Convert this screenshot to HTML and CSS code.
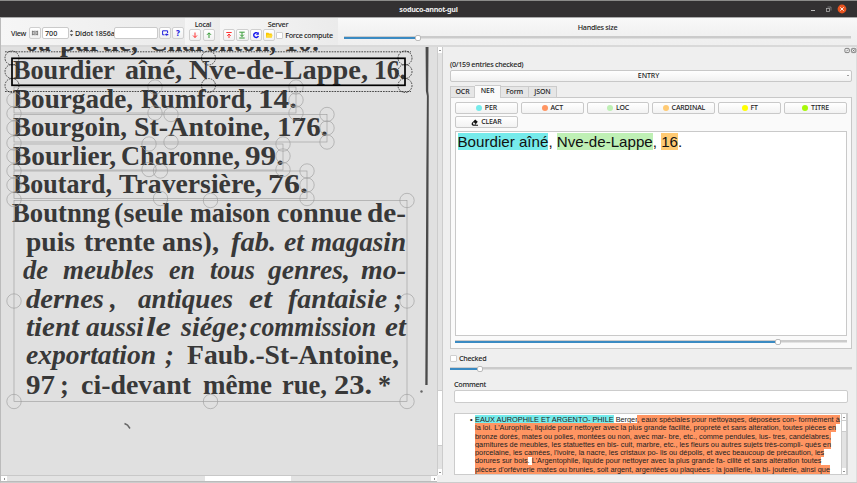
FILE: index.html
```html
<!DOCTYPE html>
<html lang="en">
<head>
<meta charset="utf-8">
<title>soduco-annot-gui</title>
<link rel="stylesheet" href="styles.css">
</head>
<body>
<div class="window">
  <header class="titlebar">
    <span class="title">soduco-annot-gui</span>
    <svg class="winbtns" width="50" height="16" viewBox="0 0 50 16" fill="none">
      <path d="M7 9.5h4" stroke="#bbb"/>
      <rect x="22.5" y="7.5" width="3" height="3" stroke="#aaa" stroke-width=".8"/><path d="M23.5 6h3.5v3.5" stroke="#888" stroke-width=".8"/>
      <circle cx="38" cy="8" r="4.4" fill="#e95420"/><path d="M36.3 6.3l3.4 3.4M39.7 6.3l-3.4 3.4" stroke="#fff" stroke-width=".9"/>
    </svg>
  </header>

  <div class="toolbar">
    <div class="group view">
      <span class="lbl name">View</span>
      <span class="btn fit"><svg width="8" height="8" viewBox="0 0 8 8"><path d="M1.4 1.7v4.6M6.6 1.7v4.6M3.2 1.7v4.6M4.9 1.7v4.6M1.4 2.7h1.8M4.9 2.7h1.7M1.4 5.3h1.8M4.9 5.3h1.7" fill="none" stroke="#555" stroke-width=".7"/></svg></span>
      <span class="field num">700</span>
      <svg class="spin" width="5" height="10" viewBox="0 0 5 10"><path d="M.8 3.7L2.5 1.8l1.7 1.9zM.8 6.3l1.7 1.9 1.7-1.9z" fill="#444"/></svg>
      <span class="lbl didot">Didot 1856a</span>
      <span class="field page"></span>
      <span class="btn nav"><svg width="8" height="8" viewBox="0 0 8 8" fill="none"><path d="M3.5 5.8H1.6V1.8h5v2.4" stroke="#22d"/><path d="M4 5.5l1.5-1.6v1h1.8v1.3H5.5v1z" fill="#22d"/></svg></span>
      <span class="btn help">?</span>
    </div>
    <div class="group local">
      <span class="head">Local</span>
      <div class="btns">
        <span class="btn"><svg width="8" height="8" viewBox="0 0 8 8"><path d="M4 1.5v5M2 4.5l2 2 2-2" fill="none" stroke="#f33"/></svg></span>
        <span class="btn"><svg width="8" height="8" viewBox="0 0 8 8"><path d="M4 7V2M2 3.8l2-2 2 2" fill="none" stroke="#393"/></svg></span>
      </div>
    </div>
    <div class="group server">
      <span class="head">Server</span>
      <div class="btns">
        <span class="btn"><svg width="8" height="8" viewBox="0 0 8 8"><path d="M1.3 1.5h5.4M4 7V3M2.2 4.8L4 3l1.8 1.8" fill="none" stroke="#f33"/></svg></span>
        <span class="btn"><svg width="8" height="8" viewBox="0 0 8 8"><path d="M1.3 1.2h5.4M1.3 7h5.4M4 1.5v4M2.2 3.7L4 5.5l1.8-1.8" fill="none" stroke="#393"/></svg></span>
        <span class="btn"><svg width="8" height="8" viewBox="0 0 8 8"><path d="M5.8 2.3A2.4 2.4 0 1 0 6.4 5" fill="none" stroke="#11e" stroke-width="1.4"/><path d="M3.8 3.8h3V1z" fill="#11e"/></svg></span>
        <span class="btn"><svg width="8" height="8" viewBox="0 0 8 8"><path d="M1 6.5V1.7h2.3l.8.8h2.7v4z" fill="#fbc800"/><path d="M1 6.5l1-2.7h5.7l-1 2.7z" fill="#ffdb32"/></svg></span>
        <span class="check"></span><span class="lbl">Force compute</span>
      </div>
    </div>
    <div class="handles">
      <span class="head">Handles size</span>
      <div class="slider s-handles"><span class="fill"></span><span class="knob"></span></div>
    </div>
  </div>

  <main class="main">
    <section class="viewer">
      <div class="scanrow">
        <svg class="scan" width="436" height="428" viewBox="1 47 436 428">
          <rect x="1" y="47" width="436" height="428" fill="#e0e0e0"/>
          <g class="print">
            <text x="26" y="50.5" textLength="25" lengthAdjust="spacingAndGlyphs">ou</text><text x="60" y="50.5" textLength="78" lengthAdjust="spacingAndGlyphs">partie,</text><text x="149" y="50.5" textLength="127" lengthAdjust="spacingAndGlyphs">Charonton,</text><text x="284" y="50.5" textLength="35" lengthAdjust="spacingAndGlyphs">10.</text>
            <text x="13" y="79" textLength="102" lengthAdjust="spacingAndGlyphs">Bourdier</text><text x="125" y="79" textLength="57" lengthAdjust="spacingAndGlyphs">aîné,</text><text x="189" y="79" textLength="179" lengthAdjust="spacingAndGlyphs">Nve-de-Lappe,</text><text x="374" y="79" textLength="32" lengthAdjust="spacingAndGlyphs">16.</text>
            <text x="13" y="107.5" textLength="120" lengthAdjust="spacingAndGlyphs">Bourgade,</text><text x="141" y="107.5" textLength="111" lengthAdjust="spacingAndGlyphs">Rumford,</text><text x="258" y="107.5" textLength="39" lengthAdjust="spacingAndGlyphs">14.</text>
            <text x="13" y="136" textLength="114" lengthAdjust="spacingAndGlyphs">Bourgoin,</text><text x="134" y="136" textLength="136" lengthAdjust="spacingAndGlyphs">St-Antoine,</text><text x="277" y="136" textLength="51" lengthAdjust="spacingAndGlyphs">176.</text>
            <text x="13" y="164.5" textLength="103" lengthAdjust="spacingAndGlyphs">Bourlier,</text><text x="121" y="164.5" textLength="119" lengthAdjust="spacingAndGlyphs">Charonne,</text><text x="245" y="164.5" textLength="39" lengthAdjust="spacingAndGlyphs">99.</text>
            <text x="13" y="193" textLength="99" lengthAdjust="spacingAndGlyphs">Boutard,</text><text x="119" y="193" textLength="143" lengthAdjust="spacingAndGlyphs">Traversière,</text><text x="268" y="193" textLength="40" lengthAdjust="spacingAndGlyphs">76.</text>
            <text x="12" y="222" textLength="98" lengthAdjust="spacingAndGlyphs">Boutnng</text><text x="114" y="222" textLength="69" lengthAdjust="spacingAndGlyphs">(seule</text><text x="190" y="222" textLength="80" lengthAdjust="spacingAndGlyphs">maison</text><text x="277" y="222" textLength="85" lengthAdjust="spacingAndGlyphs">connue</text><text x="367" y="222" textLength="39" lengthAdjust="spacingAndGlyphs">de-</text>
            <text x="26" y="250.5" textLength="49" lengthAdjust="spacingAndGlyphs">puis</text><text x="84" y="250.5" textLength="71" lengthAdjust="spacingAndGlyphs">trente</text><text x="162" y="250.5" textLength="57" lengthAdjust="spacingAndGlyphs">ans),</text>
            <text x="26" y="394" textLength="29" lengthAdjust="spacingAndGlyphs">97</text><text x="60" y="394">;</text><text x="81" y="394" textLength="110" lengthAdjust="spacingAndGlyphs">ci-devant</text><text x="203" y="394" textLength="69" lengthAdjust="spacingAndGlyphs">même</text><text x="282" y="394" textLength="45" lengthAdjust="spacingAndGlyphs">rue,</text><text x="334" y="394" textLength="38" lengthAdjust="spacingAndGlyphs">23.</text><text x="378" y="394" textLength="13" lengthAdjust="spacingAndGlyphs">*</text>
            <text x="187" y="364" textLength="212" lengthAdjust="spacingAndGlyphs">Faub.-St-Antoine,</text>
            <g class="ital">
              <text x="231" y="250.5" textLength="45" lengthAdjust="spacingAndGlyphs">fab.</text><text x="284" y="250.5" textLength="20" lengthAdjust="spacingAndGlyphs">et</text><text x="311" y="250.5" textLength="95" lengthAdjust="spacingAndGlyphs">magasin</text>
              <text x="23" y="279" textLength="25" lengthAdjust="spacingAndGlyphs">de</text><text x="63" y="279" textLength="91" lengthAdjust="spacingAndGlyphs">meubles</text><text x="169" y="279" textLength="26" lengthAdjust="spacingAndGlyphs">en</text><text x="210" y="279" textLength="45" lengthAdjust="spacingAndGlyphs">tous</text><text x="268" y="279" textLength="82" lengthAdjust="spacingAndGlyphs">genres,</text><text x="361" y="279" textLength="45" lengthAdjust="spacingAndGlyphs">mo-</text>
              <text x="26" y="307.5" textLength="78" lengthAdjust="spacingAndGlyphs">dernes</text><text x="110" y="307.5">,</text><text x="138" y="307.5" textLength="95" lengthAdjust="spacingAndGlyphs">antiques</text><text x="249" y="307.5" textLength="23" lengthAdjust="spacingAndGlyphs">et</text><text x="288" y="307.5" textLength="99" lengthAdjust="spacingAndGlyphs">fantaisie</text><text x="394" y="307.5">;</text>
              <text x="26" y="335.5" textLength="53" lengthAdjust="spacingAndGlyphs">tient</text><text x="86" y="335.5" textLength="58" lengthAdjust="spacingAndGlyphs">aussi</text><text x="146" y="335.5" textLength="25" lengthAdjust="spacingAndGlyphs">le</text><text x="181" y="335.5" textLength="67" lengthAdjust="spacingAndGlyphs">siége;</text><text x="250" y="335.5" textLength="126" lengthAdjust="spacingAndGlyphs">commission</text><text x="385" y="335.5" textLength="21" lengthAdjust="spacingAndGlyphs">et</text>
              <text x="26" y="364" textLength="130" lengthAdjust="spacingAndGlyphs">exportation</text><text x="165" y="364">;</text>
            </g>
          </g>
          <path d="M425.6 47l.3 44 1 5-.6 80-1 209h2.3l.8-160 .4-129-.6-5 .3-44z" fill="#4a4a4a"/>
          <circle cx="421.5" cy="391.5" r="1.2" fill="#666"/>
          <path d="M124.5 423.5l3 1.5 2.5 3.5" fill="none" stroke="#666" stroke-width="1.5"/>
          <g class="boxes">
            <rect x="14" y="87" width="282" height="26"/><rect x="14" y="114.5" width="313" height="27.5"/><rect x="14" y="144" width="269" height="26"/><rect x="14" y="171" width="293" height="27.5"/><rect x="14" y="200.5" width="393" height="201"/>
            <circle cx="155" cy="87" r="7.2"/><circle cx="155" cy="113" r="7.2"/><circle cx="296" cy="87" r="7.2"/><circle cx="296" cy="100" r="7.2"/><circle cx="296" cy="113" r="7.2"/><circle cx="14" cy="100" r="7.2"/><circle cx="14" cy="113.5" r="7.2"/>
            <circle cx="171" cy="114.5" r="7.2"/><circle cx="171" cy="142" r="7.2"/><circle cx="327" cy="114.5" r="7.2"/><circle cx="327" cy="128" r="7.2"/><circle cx="327" cy="142" r="7.2"/><circle cx="14" cy="128" r="7.2"/><circle cx="14" cy="143" r="7.2"/>
            <circle cx="149" cy="144" r="7.2"/><circle cx="149" cy="169.5" r="7.2"/><circle cx="283" cy="144" r="7.2"/><circle cx="283" cy="156" r="7.2"/><circle cx="283" cy="169.5" r="7.2"/><circle cx="14" cy="156" r="7.2"/><circle cx="14" cy="171" r="7.2"/>
            <circle cx="160.5" cy="171" r="7.2"/><circle cx="160.5" cy="198.5" r="7.2"/><circle cx="307" cy="171" r="7.2"/><circle cx="307" cy="185" r="7.2"/><circle cx="307" cy="198.5" r="7.2"/><circle cx="14" cy="185" r="7.2"/><circle cx="14" cy="199.5" r="7.2"/>
            <circle cx="210.5" cy="200.5" r="7.2"/><circle cx="407" cy="200.5" r="7.2"/><circle cx="407" cy="301" r="7.2"/><circle cx="14" cy="301" r="7.2"/><circle cx="14" cy="401.5" r="7.2"/><circle cx="210.5" cy="401.5" r="7.2"/><circle cx="407" cy="401.5" r="7.2"/>
          </g>
          <g class="selected">
            <path d="M5 51.8h406M5 91.5h406"/>
            <circle cx="12" cy="58" r="7"/><circle cx="12" cy="71.5" r="7"/><circle cx="12" cy="85.5" r="7"/><circle cx="208.5" cy="58" r="7"/><circle cx="208.5" cy="85.5" r="7"/><circle cx="405" cy="58" r="7"/><circle cx="405" cy="71.5" r="7"/><circle cx="405" cy="85.5" r="7"/>
            <rect x="12" y="58.3" width="393" height="27" class="thick"/>
          </g>
        </svg>
        <div class="vbar"><span class="arrow up"></span><span class="track"></span><span class="thumb"></span><span class="rest"></span><span class="arrow down"></span></div>
      </div>
      <div class="hbar"><span class="arrow left"></span><span class="track"></span><span class="thumb"></span><span class="rest"></span><span class="arrow right"></span></div>
    </section>

    <aside class="side">
      <div class="dock">
        <svg width="13" height="7" viewBox="0 0 13 7" fill="none" stroke="#666" stroke-width=".8"><rect x=".9" y="1.4" width="4.4" height="4.2" rx="1"/><path d="M2.3 4.4l1.8-1.8"/><rect x="7.4" y="1.4" width="4.4" height="4.2" rx="1"/><path d="M8.5 2.4l2.2 2.2M10.7 2.4L8.5 4.6"/></svg>
      </div>
      <div class="count">(0/159 entries checked)</div>
      <div class="combo"><span>ENTRY</span><i></i></div>
      <div class="tabs"><span class="t1">OCR</span><span class="t2 on">NER</span><span class="t3">Form</span><span class="t4">JSON</span></div>
      <div class="pane">
        <div class="tags">
          <span class="tag"><i class="per"></i>PER</span>
          <span class="tag"><i class="act"></i>ACT</span>
          <span class="tag"><i class="loc"></i>LOC</span>
          <span class="tag"><i class="card"></i>CARDINAL</span>
          <span class="tag"><i class="ft"></i>FT</span>
          <span class="tag"><i class="titre"></i>TITRE</span>
          <span class="tag"><svg width="8" height="7" viewBox="0 0 8 7"><path d="M.8 3.9L4.2.6l2.6 2.2-2.5 3H7V6.7H1.8L.6 5.4z" fill="#111"/><path d="M1.8 4.3l1.1-1 1.5 1.4-.9 1H2.6z" fill="#eee"/></svg>CLEAR</span>
        </div>
        <div class="editor"><mark class="per">Bourdier aîné</mark>, <mark class="loc">Nve-de-Lappe</mark>, <mark class="card">16</mark>.</div>
        <div class="slider s-zoom"><span class="fill"></span><span class="knob"></span></div>
      </div>
      <div class="checked"><span class="check"></span>Checked</div>
      <div class="slider s-low"><span class="fill"></span><span class="knob"></span></div>
      <div class="comment">Comment</div>
      <div class="input"></div>
      <div class="preview">
        <div class="text">
          <div class="l1"><b>•</b><mark class="per">EAUX AUROPHILE ET ARGENTO- PHILE</mark> Berger<mark class="act">, eaux spéciales pour nettoyages, déposées con- formément à</mark></div>
          <div><mark class="act">la loi. L'Aurophile, liquide pour nettoyer avec la plus grande facilité, propreté et sans altération, toutes pièces en</mark></div>
          <div><mark class="act">bronze dorés, mates ou polies, montées ou non, avec mar- bre, etc., comme pendules, lus- tres, candélabres,</mark></div>
          <div><mark class="act">garnitures de meubles, les statuettes en bis- cuit, marbre, etc., les fleurs ou autres sujets très-compli- qués en</mark></div>
          <div><mark class="act">porcelaine, les camées, l'ivoire, la nacre, les cristaux po- lis ou dépolis, et avec beaucoup de précaution, les</mark></div>
          <div><mark class="act">dorures sur bois</mark>. <mark class="act">L'Argentophile, liquide pour nettoyer avec la plus grande fa- cilité et sans altération toutes</mark></div>
          <div><mark class="act">pièces d'orfévrerie mates ou brunies, soit argent, argentées ou plaquées : la joaillerie, la bi- jouterie, ainsi que</mark></div>
        </div>
        <div class="vbar small"><span class="arrow up"></span><span class="thumb"></span><span class="track"></span><span class="arrow down"></span></div>
      </div>
    </aside>
  </main>
</div>
</body>
</html>
```

FILE: styles.css
```css
* { box-sizing: border-box; }
body {
  margin: 0;
  width: 857px;
  height: 483px;
  overflow: hidden;
  background: #efefef;
  color: #222;
  font: 500 7.2px/10px "Noto Sans", "Liberation Sans", sans-serif;
  letter-spacing: -.28px;
}
.window {
  height: 483px;
  display: flex;
  flex-direction: column;
  border-left: 1px solid #bbb;
  border-bottom: 1px solid #ccc;
}
.titlebar {
  height: 18px;
  flex: none;
  display: grid;
  grid-template-columns: 50px 1fr 50px;
  background: #333132;
  border-top: 1px solid #8c8c8a;
  margin-left: -1px;
  border-bottom: 1px solid #aaa;
}
.title {
  grid-column: 2;
  text-align: center;
  color: #eee;
  font-weight: 700;
  font-size: 7.2px;
  line-height: 16px;
}
.winbtns { margin-left: -3px; }

.toolbar {
  height: 29px;
  flex: none;
  display: flex;
  background: linear-gradient(#f9f9f9, #f1f1f1 60%, #efefef);
  border-bottom: 2px solid #d9d9d9;
}
.group { height: 27px; background: linear-gradient(90deg, #f6f6f6, #ebebeb); }
.view { width: 184px; display: flex; align-items: center; padding: 2px 0 0 10px; }
.lbl { white-space: nowrap; flex: none; }
.name { width: 18px; }
.btn {
  width: 12px;
  height: 12px;
  flex: none;
  display: flex;
  align-items: center;
  justify-content: center;
  border: 1px solid #cfcfcf;
  border-radius: 2px;
  background: linear-gradient(#fff, #f0f0f0);
}
.field { height: 12px; background: #fff; border: 1px solid #cacaca; border-radius: 2px; flex: none; }
.num { width: 27px; margin-left: 1px; padding-left: 2px; line-height: 10px; letter-spacing: 0; }
.spin { margin: 0 1px 0 0; flex: none; }
.didot { width: 39px; letter-spacing: -.14px; }
.page { width: 44px; }
.nav { margin-left: 1px; }
.help { margin-left: 1px; color: #22d; font-weight: 800; font-size: 8px; letter-spacing: 0; }
.head { display: block; text-align: center; line-height: 10px; }
.local { width: 35px; padding-top: 1px; padding-left: 3px; padding-right: 2px; }
.btns { display: flex; gap: 1px; align-items: center; }
.local .btns { margin-left: 1px; }
.local .btns { gap: 2px; }
.server { width: 118px; padding: 1px 0 0 3px; }
.server .head { width: 110px; }
.server .btn { width: 12.3px; }
.server .lbl { margin-left: 1px; }
.check { width: 7px; height: 7px; flex: none; background: #fff; border: 1px solid #cfcfcf; border-radius: 1px; }
.handles { flex: 1; padding: 4px 6px 0 6px; }

.slider {
  height: 7px;
  display: flex;
  align-items: center;
  background: linear-gradient(#cbcbcb, #cbcbcb) center / 100% 2.5px no-repeat;
}
.fill { height: 2px; background: #3a8ac2; }
.knob { width: 6px; height: 6px; background: #fff; border: 1px solid #bbb; border-radius: 2px; }
.s-handles { margin-top: 2px; }
.s-handles .fill { width: 71px; }

.main { flex: 1; min-height: 0; display: flex; }
.viewer { width: 442px; height: 435px; flex: none; }
.scanrow { display: flex; height: 428px; }
.scan { display: block; flex: none; }
.print { font: bold 26.5px "Liberation Serif", serif; fill: #383838; letter-spacing: 0; }
.ital { font-style: italic; }
.boxes { fill: none; stroke: #999; stroke-width: .6; }
.selected { fill: none; stroke: #222; stroke-width: .8; stroke-dasharray: 1.7 1; }
.thick { stroke: #000; stroke-width: 1.7; stroke-dasharray: none; }

.vbar { width: 6px; flex: none; display: flex; flex-direction: column; background: #e3e3e3; border-left: 1px solid #ccc; border-right: 1px solid #ccc; }
.hbar { height: 7px; width: 436px; display: flex; background: #e3e3e3; border-top: 1px solid #c8c8c8; border-bottom: 1px solid #bbb; }
.thumb { background: #fff; }
.vbar .thumb { height: 56px; border: solid #ccc; border-width: 1px 0; }
.vbar .track { flex: 1; }
.vbar .rest { height: 23px; }
.hbar .track { width: 198px; }
.hbar .thumb { width: 86px; }
.hbar .rest { flex: 1; }
.arrow { flex: none; background: #fff; display: flex; align-items: center; justify-content: center; }
.vbar .arrow { height: 6px; }
.hbar .arrow { width: 6px; }
.arrow::after { content: ""; border: 1.3px solid transparent; }
.up::after { border-bottom-color: #222; border-top: 0; }
.down::after { border-top-color: #222; border-bottom: 0; }
.left::after { border-right-color: #222; border-left: 0; }
.right::after { border-left-color: #222; border-right: 0; }

.side { width: 414px; padding: 0 4px 0 7px; display: flex; flex-direction: column; border-right: 1px solid #ddd; }
.dock { height: 12px; flex: none; text-align: right; margin-right: -5px; line-height: 0; }
.count { height: 11px; flex: none; white-space: nowrap; }
.combo {
  height: 12px;
  flex: none;
  display: flex;
  align-items: center;
  justify-content: center;
  position: relative;
  border: 1px solid #c8c8c8;
  border-radius: 2px;
  background: linear-gradient(#fff, #f1f1f1);
}
.combo span { margin-right: 5px; font-size: 7px; letter-spacing: -.1px; }
.combo i { position: absolute; right: 2px; top: 4px; border: 1.5px solid transparent; border-top-color: #444; }
.tabs { display: flex; height: 14px; flex: none; margin-top: 2px; margin-bottom: -1px; align-items: flex-end; font-size: 7px; letter-spacing: -.1px; z-index: 1; }
.tabs span { height: 12px; line-height: 10px; text-align: center; background: #e6e6e6; border: 1px solid #ccc; border-left-width: 0; }
.tabs .t1 { width: 25px; border-left-width: 1px; }
.tabs .t2 { width: 26px; height: 13px; line-height: 10px; background: #fafafa; border-bottom: 0; }
.tabs .t3, .tabs .t4 { width: 28px; }
.pane { height: 252px; flex: none; border: 1px solid #c8c8c8; background: #fafafa; padding: 4px 4px 0; display: flex; flex-direction: column; }
.tags { display: grid; grid-template-columns: repeat(6, 1fr); column-gap: 3px; row-gap: 2px; flex: none; }
.tag {
  height: 12px;
  display: flex;
  align-items: center;
  justify-content: center;
  gap: 3px;
  font-size: 7px;
  letter-spacing: -.15px;
  border: 1px solid #c9c9c9;
  border-radius: 2px;
  background: linear-gradient(#fff, #f2f2f2);
}
.tag svg { margin-right: -1px; }
.tag i { width: 6px; height: 6px; border-radius: 50%; }
.per { background: #76ebeb; }
.act { background: #ff9562; }
.loc { background: #bff0b5; }
.card { background: #ffca73; }
.ft { background: #ffff00; }
.titre { background: #a8f808; }
mark { color: inherit; }
.editor {
  height: 205px;
  flex: none;
  margin-top: 3px;
  padding: 1px 1.5px;
  background: #fff;
  border: 1px solid #c9c9c9;
  color: #111;
  font: 15.15px/18px "Liberation Sans", Arial, sans-serif;
  letter-spacing: 0;
}
.s-zoom { margin-top: 2px; }
.s-zoom .fill { width: 320px; }
.checked { display: flex; align-items: center; gap: 2px; height: 10px; flex: none; margin-top: 4px; }
.s-low { margin-top: 2px; flex: none; }
.s-low .fill { width: 27px; }
.comment { margin: 7px 4px 0; height: 11px; flex: none; }
.input { height: 13px; flex: none; margin: 0 4px; background: #fff; border: 1px solid #ccc; border-radius: 2px; }
.preview { display: flex; justify-content: space-between; height: 62px; flex: none; margin: 10px 4px 0; background: #fff; border: 1px solid #ccc; overflow: hidden; }
.text { padding: 2px 0 0 20px; width: 386px; font: 7.33px/8.3px "Liberation Sans", Arial, sans-serif; letter-spacing: 0; color: #222; white-space: nowrap; }
.text div { height: 8.3px; }
.text .l1 { margin-left: -5px; }
.l1 b { display: inline-block; width: 5px; }
.small .thumb { height: 12px; }
```
